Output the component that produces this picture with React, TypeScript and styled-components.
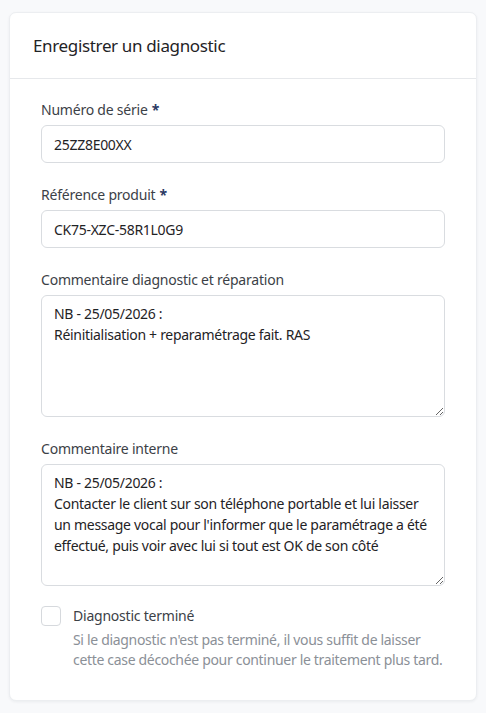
import React from 'react';
import styled, { createGlobalStyle } from 'styled-components';

const GlobalStyle = createGlobalStyle`
  html, body {
    margin: 0;
    padding: 0;
    background: #f8f9fb;
  }
  body {
    font-family: 'Noto Sans', 'Open Sans', sans-serif;
    color: #23272b;
  }
  * {
    box-sizing: border-box;
  }
`;

const Page = styled.div`
  padding: 12px 9px 12px 9px;
`;

const Card = styled.section`
  background: #ffffff;
  border-radius: 7px;
  border: 1px solid #eceef1;
  box-shadow: 0 1px 3px rgba(20, 30, 50, 0.06);
`;

const CardHeader = styled.header`
  height: 66px;
  display: flex;
  align-items: center;
  padding: 0 23px;
  border-bottom: 1px solid #e6e8eb;
`;

const Title = styled.h2`
  margin: 0;
  font-size: 17px;
  font-weight: 400;
  letter-spacing: -0.35px;
  color: #1f2326;
`;

const CardBody = styled.div`
  padding: 21px 31px 30px 31px;
  display: flex;
  flex-direction: column;
  gap: 22px;
`;

const Field = styled.div`
  display: flex;
  flex-direction: column;
  gap: 5px;
`;

const Label = styled.label`
  font-size: 14px;
  line-height: 20px;
  letter-spacing: -0.22px;
  color: #3c4147;
`;

const Required = styled.span`
  color: #2c3a63;
  font-weight: 700;
  margin-left: 4px;
`;

const Input = styled.input`
  height: 38px;
  width: 100%;
  padding: 0 12px;
  font: inherit;
  font-size: 14px;
  letter-spacing: -0.28px;
  color: #1f2326;
  border: 1px solid #d9dce0;
  border-radius: 6px;
  background: #fff;
  outline: none;
`;

const TextArea = styled.textarea`
  width: 100%;
  height: 122px;
  padding: 7px 12px;
  font: inherit;
  font-size: 14px;
  line-height: 21px;
  letter-spacing: -0.3px;
  color: #1f2326;
  border: 1px solid #d9dce0;
  border-radius: 6px;
  background: #fff;
  resize: vertical;
  outline: none;
  display: block;
`;

const CheckRow = styled.div`
  display: flex;
  align-items: flex-start;
  gap: 12px;
  margin-top: -2px;
`;

const Box = styled.input.attrs({ type: 'checkbox' })`
  appearance: none;
  margin: 0;
  width: 20px;
  height: 20px;
  flex: none;
  border: 1px solid #d6d9dd;
  border-radius: 4px;
  background: #fff;
`;

const CheckText = styled.div`
  display: flex;
  flex-direction: column;
`;

const CheckLabel = styled.label`
  font-size: 14px;
  line-height: 20px;
  letter-spacing: -0.22px;
  color: #3c4147;
  margin-bottom: 4px;
`;

const Help = styled.p`
  margin: 0;
  font-size: 14px;
  line-height: 20px;
  letter-spacing: -0.32px;
  color: #8b9097;
`;

export default function App() {
  return (
    <Page>
      <GlobalStyle />
      <Card>
        <CardHeader>
          <Title>Enregistrer un diagnostic</Title>
        </CardHeader>
        <CardBody>
          <Field>
            <Label>
              Numéro de série<Required>*</Required>
            </Label>
            <Input defaultValue="25ZZ8E00XX" />
          </Field>
          <Field>
            <Label>
              Référence produit<Required>*</Required>
            </Label>
            <Input defaultValue="CK75-XZC-58R1L0G9" />
          </Field>
          <Field>
            <Label>Commentaire diagnostic et réparation</Label>
            <TextArea
              defaultValue={'NB - 25/05/2026 :\nRéinitialisation + reparamétrage fait. RAS'}
            />
          </Field>
          <Field>
            <Label>Commentaire interne</Label>
            <TextArea
              defaultValue={
                "NB - 25/05/2026 :\nContacter le client sur son téléphone portable et lui laisser un message vocal pour l'informer que le paramétrage a été effectué, puis voir avec lui si tout est OK de son côté"
              }
            />
          </Field>
          <CheckRow>
            <Box id="done" />
            <CheckText>
              <CheckLabel htmlFor="done">Diagnostic terminé</CheckLabel>
              <Help>
                Si le diagnostic n'est pas terminé, il vous suffit de laisser cette case décochée
                pour continuer le traitement plus tard.
              </Help>
            </CheckText>
          </CheckRow>
        </CardBody>
      </Card>
    </Page>
  );
}
